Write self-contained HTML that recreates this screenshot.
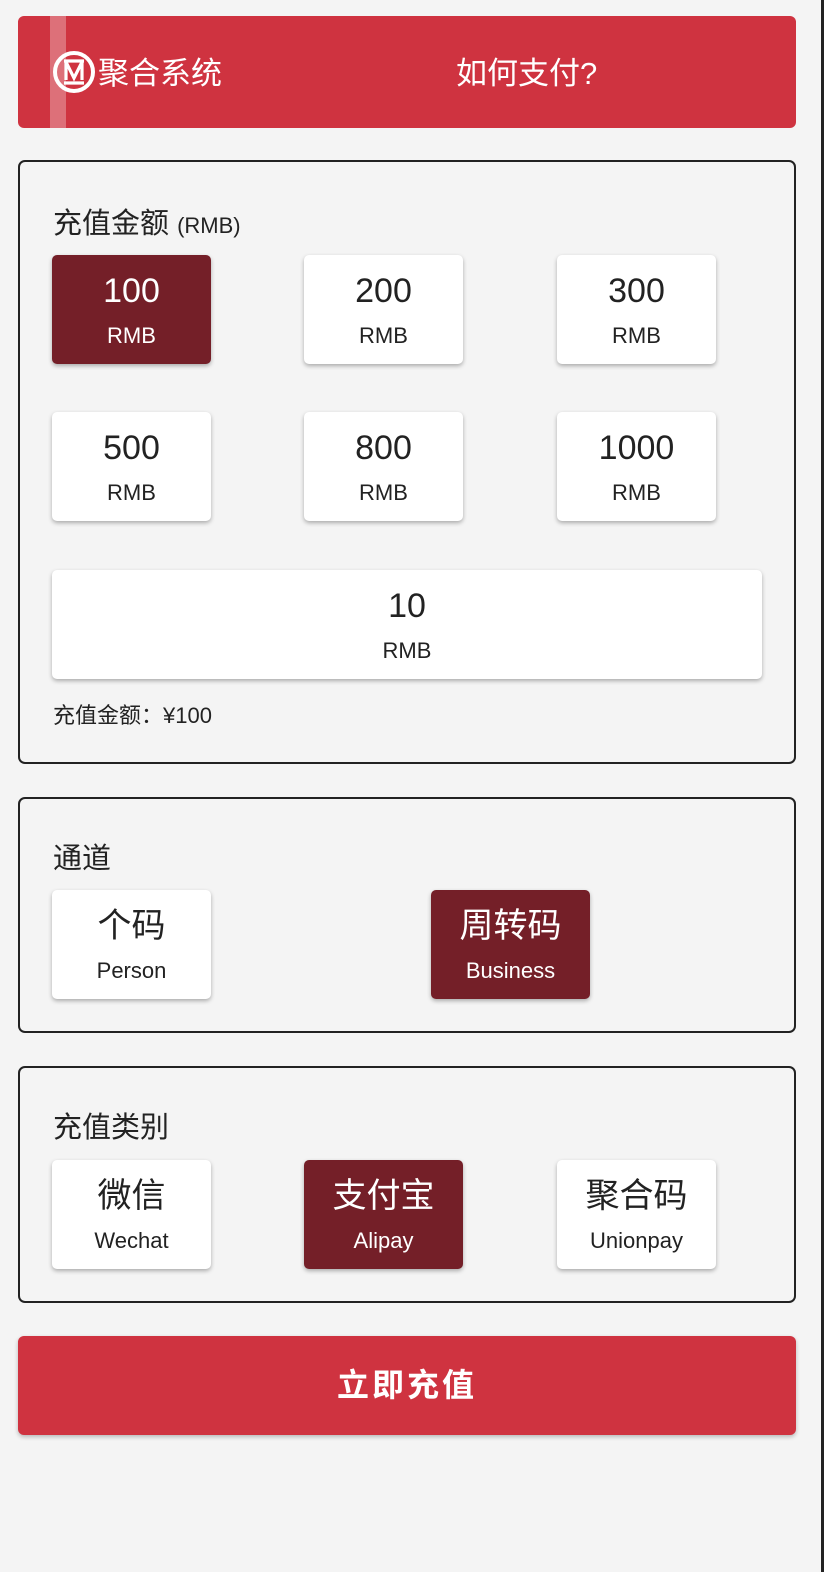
<!DOCTYPE html>
<html><head><meta charset="utf-8"><style>
*{box-sizing:border-box;margin:0;padding:0}
body{width:824px;height:1572px;background:#f4f4f4;font-family:"Liberation Sans","Noto Sans CJK SC",sans-serif;color:#222;position:relative;overflow:hidden}
.edge{position:absolute;right:0;top:0;width:3px;height:1572px;background:#222}
.hdr{position:absolute;left:18px;top:16px;width:778px;height:112px;background:#cf3340;border-radius:6px;color:#fff;overflow:hidden}
.stripe{position:absolute;left:32px;top:0;width:16px;height:112px;background:rgba(255,255,255,.3)}
.logo{position:absolute;left:34px;top:34px;width:44px;height:44px}
.title{position:absolute;left:80px;top:38px;font-size:31px;line-height:40px}
.how{position:absolute;left:438px;top:38px;font-size:31px;line-height:40px}
.card{position:absolute;left:18px;width:778px;border:2px solid #222;border-radius:7px}
.lbl{position:absolute;left:33px;font-size:29px;line-height:36px}
.b{position:absolute;width:159px;height:109px;background:#fff;border-radius:5px;box-shadow:0 2px 4px rgba(0,0,0,.3);text-align:center}
.b .n{font-size:34px;line-height:40px;margin-top:16px;display:block}
.b .u{font-size:22px;line-height:28px;display:block;margin-top:11px}
.b.s{background:#741f28;color:#fff}
.btn{position:absolute;left:18px;top:1336px;width:778px;height:99px;background:#cf3340;border-radius:6px;color:#fff;font-size:32px;font-weight:bold;text-align:center;line-height:99px;letter-spacing:3px;box-shadow:0 2px 4px rgba(0,0,0,.25)}
</style></head><body>
<div class="edge"></div>
<div class="hdr"><div class="stripe"></div>
<svg class="logo" viewBox="0 0 44 44"><circle cx="22" cy="22" r="19" fill="none" stroke="#fff" stroke-width="4"/><path d="M12 11h20M12 33h20M14 30V12l8 16 8-16v18" fill="none" stroke="#fff" stroke-width="3.2"/></svg>
<div class="title">聚合系统</div><div class="how">如何支付?</div></div>

<div class="card" style="top:160px;height:604px">
<div class="lbl" style="top:44px">充值金额 <span style="font-size:22px">(RMB)</span></div>
<div class="b s" style="left:32px;top:93px"><span class="n">100</span><span class="u">RMB</span></div>
<div class="b" style="left:284px;top:93px"><span class="n">200</span><span class="u">RMB</span></div>
<div class="b" style="left:537px;top:93px"><span class="n">300</span><span class="u">RMB</span></div>
<div class="b" style="left:32px;top:250px"><span class="n">500</span><span class="u">RMB</span></div>
<div class="b" style="left:284px;top:250px"><span class="n">800</span><span class="u">RMB</span></div>
<div class="b" style="left:537px;top:250px"><span class="n">1000</span><span class="u">RMB</span></div>
<div class="b" style="left:32px;top:408px;width:710px"><span class="n">10</span><span class="u">RMB</span></div>
<div style="position:absolute;left:33px;top:540px;font-size:22px;line-height:28px">充值金额：¥100</div>
</div>

<div class="card" style="top:797px;height:236px">
<div class="lbl" style="top:42px">通道</div>
<div class="b" style="left:32px;top:91px"><span class="n">个码</span><span class="u">Person</span></div>
<div class="b s" style="left:411px;top:91px"><span class="n">周转码</span><span class="u">Business</span></div>
</div>

<div class="card" style="top:1066px;height:237px">
<div class="lbl" style="top:42px">充值类别</div>
<div class="b" style="left:32px;top:92px"><span class="n">微信</span><span class="u">Wechat</span></div>
<div class="b s" style="left:284px;top:92px"><span class="n">支付宝</span><span class="u">Alipay</span></div>
<div class="b" style="left:537px;top:92px"><span class="n">聚合码</span><span class="u">Unionpay</span></div>
</div>

<div class="btn">立即充值</div>
</body></html>
